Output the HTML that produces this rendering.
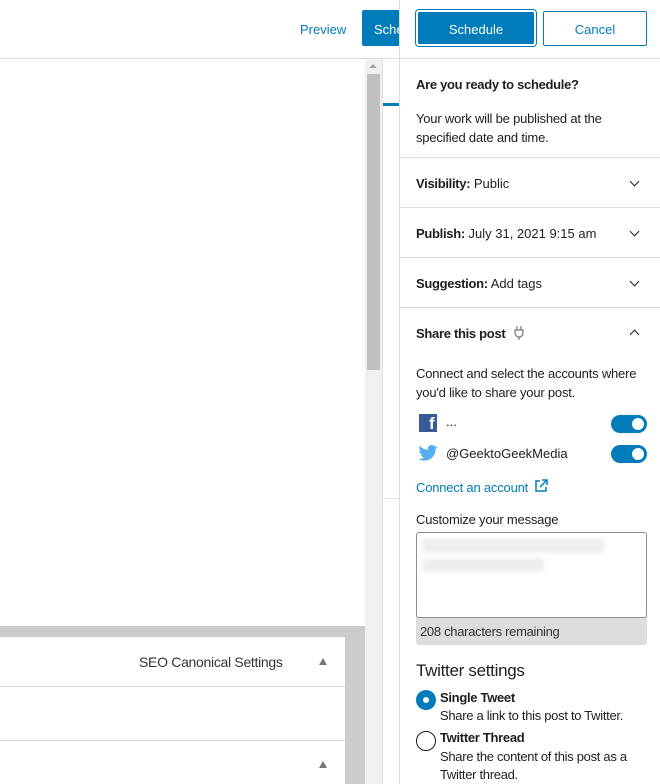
<!DOCTYPE html><html><head><meta charset="utf-8"><style>
*{margin:0;padding:0;box-sizing:border-box}
body{width:660px;height:784px;overflow:hidden;position:relative;background:#fff;font-family:"Liberation Sans",sans-serif;font-size:13px;color:#1e1e1e}
b,.bold{letter-spacing:-0.3px}
.a{position:absolute}
.t{position:absolute;white-space:nowrap}
.row{position:absolute;left:400px;width:260px;border-top:1px solid #ddd}
.chev{position:absolute;right:22px;width:7px;height:7px;border-right:1.6px solid #1e1e1e;border-bottom:1.6px solid #1e1e1e;transform:rotate(45deg)}
.tog{position:absolute;left:611px;width:36px;height:18px;border-radius:9px;background:#007cba}
.tog:after{content:"";position:absolute;right:3px;top:3px;width:12px;height:12px;border-radius:50%;background:#fff}
</style></head><body>
<div class="a" style="left:0;top:58px;width:400px;height:1px;background:#ddd"></div>
<div class="t" style="left:300px;top:22px;color:#007cba">Preview</div>
<div class="a" style="left:362px;top:10px;width:38px;height:36px;background:#007cba;border-radius:2px;overflow:hidden"><span class="t" style="left:12px;top:12px;color:#fff">Sche</span></div>
<div class="a" style="left:365px;top:59px;width:17px;height:725px;background:#f0f0f0"></div>
<div class="a" style="left:367px;top:74px;width:13px;height:296px;background:#c1c1c1"></div>
<div class="a" style="left:369px;top:64px;width:0;height:0;border-left:4px solid transparent;border-right:4px solid transparent;border-bottom:4px solid #a3a3a3"></div>
<div class="a" style="left:382px;top:59px;width:1px;height:725px;background:#e0e0e0"></div>
<div class="a" style="left:383px;top:103px;width:16px;height:3px;background:#007cba"></div>
<div class="a" style="left:383px;top:498px;width:16px;height:1px;background:#e0e0e0"></div>
<div class="a" style="left:0;top:626px;width:365px;height:158px;background:#ccc"></div>
<div class="a" style="left:0;top:637px;width:345px;height:147px;background:#fff"></div>
<div class="a" style="left:0;top:686px;width:345px;height:1px;background:#ddd"></div>
<div class="a" style="left:0;top:740px;width:345px;height:1px;background:#ddd"></div>
<div class="t" style="left:139px;top:654px;font-size:14px;color:#333;letter-spacing:-0.3px">SEO Canonical Settings</div>
<div class="a" style="left:319px;top:658px;border-left:4px solid transparent;border-right:4px solid transparent;border-bottom:7px solid #777"></div>
<div class="a" style="left:319px;top:761px;border-left:4px solid transparent;border-right:4px solid transparent;border-bottom:7px solid #777"></div>
<div class="a" style="left:399px;top:0;width:1px;height:784px;background:#ddd"></div>
<div class="a" style="left:416px;top:10px;width:120px;height:36px;background:#007cba;border:2px solid #fff;outline:1.5px solid #007cba;border-radius:3px;color:#fff;text-align:center;line-height:36px">Schedule</div>
<div class="a" style="left:543px;top:11px;width:104px;height:35px;border:1px solid #007cba;border-radius:2px;color:#007cba;text-align:center;line-height:35px">Cancel</div>
<div class="row" style="top:58px"></div>
<div class="t bold" style="left:416px;top:77px;font-weight:bold">Are you ready to schedule?</div>
<div class="t" style="left:416px;top:109px;line-height:19px;letter-spacing:-0.2px">Your work will be published at the<br>specified date and time.</div>
<div class="row" style="top:157px"></div>
<div class="t" style="left:416px;top:176px"><b>Visibility:</b> Public</div><div class="chev" style="top:178px"></div>
<div class="row" style="top:207px"></div>
<div class="t" style="left:416px;top:226px"><b>Publish:</b> July 31, 2021 9:15 am</div><div class="chev" style="top:228px"></div>
<div class="row" style="top:257px"></div>
<div class="t" style="left:416px;top:276px"><b>Suggestion:</b> Add tags</div><div class="chev" style="top:278px"></div>
<div class="row" style="top:307px"></div>
<div class="t bold" style="left:416px;top:326px;font-weight:bold">Share this post</div>
<svg class="a" style="left:513px;top:325px" width="12" height="16" viewBox="0 0 12 16"><path d="M4 1v4M8 1v4M2 5h8v3a4 4 0 0 1-8 0zM6 12v3" fill="none" stroke="#777" stroke-width="1.2"/></svg>
<div class="chev" style="top:331px;transform:rotate(225deg)"></div>
<div class="t" style="left:416px;top:364px;line-height:19px;letter-spacing:-0.2px">Connect and select the accounts where<br>you'd like to share your post.</div>
<div class="a" style="left:419px;top:414px;width:18px;height:18px;background:#3b5998"></div>
<div class="t" style="left:429px;top:414px;color:#fff;font-weight:bold;font-size:17px">f</div>
<div class="t" style="left:446px;top:414px">...</div>
<div class="tog" style="top:415px"></div>
<svg class="a" style="left:418px;top:445px" width="20" height="16" viewBox="0 0 24 20"><path d="M24 2.4a10 10 0 0 1-2.8.8A5 5 0 0 0 23.3.5a10 10 0 0 1-3.1 1.2A4.9 4.9 0 0 0 11.8 6 14 14 0 0 1 1.7.9a4.9 4.9 0 0 0 1.5 6.6A5 5 0 0 1 1 6.9v.1a4.9 4.9 0 0 0 3.9 4.8 5 5 0 0 1-2.2.1 4.9 4.9 0 0 0 4.6 3.4A9.9 9.9 0 0 1 0 17.3 14 14 0 0 0 7.5 19.5c9.1 0 14-7.5 14-14v-.6A10 10 0 0 0 24 2.4z" fill="#55acee"/></svg>
<div class="t" style="left:446px;top:446px">@GeektoGeekMedia</div>
<div class="tog" style="top:445px"></div>
<div class="t" style="left:416px;top:480px;color:#007cba;letter-spacing:-0.2px">Connect an account</div>
<svg class="a" style="left:534px;top:479px" width="14" height="14" viewBox="0 0 14 14"><path d="M6 2H2v10h10V8M8 1h5v5M13 1L6 8" fill="none" stroke="#007cba" stroke-width="1.5"/></svg>
<div class="t" style="left:416px;top:512px;letter-spacing:-0.2px">Customize your message</div>
<div class="a" style="left:416px;top:532px;width:231px;height:113px;background:#ddd;border-radius:3px"></div>
<div class="a" style="left:416px;top:532px;width:231px;height:86px;background:#fff;border:1px solid #8c8f94;border-radius:3px"></div>
<div class="a" style="left:422px;top:539px;width:182px;height:14px;background:#eee;filter:blur(2px)"></div>
<div class="a" style="left:422px;top:558px;width:122px;height:14px;background:#eee;filter:blur(2px)"></div>
<div class="t" style="left:420px;top:624px;color:#333;letter-spacing:-0.3px">208 characters remaining</div>
<div class="t" style="left:416px;top:661px;font-size:17px;letter-spacing:-0.3px">Twitter settings</div>
<div class="a" style="left:416px;top:690px;width:20px;height:20px;border-radius:50%;background:#007cba"></div>
<div class="a" style="left:423px;top:697px;width:6px;height:6px;border-radius:50%;background:#fff"></div>
<div class="t" style="left:440px;top:690px;letter-spacing:-0.3px;font-weight:bold">Single Tweet</div>
<div class="t" style="left:440px;top:708px;letter-spacing:-0.3px">Share a link to this post to Twitter.</div>
<div class="a" style="left:416px;top:731px;width:20px;height:20px;border-radius:50%;border:1px solid #1e1e1e"></div>
<div class="t" style="left:440px;top:730px;letter-spacing:-0.3px;font-weight:bold">Twitter Thread</div>
<div class="t" style="left:440px;top:748px;line-height:18px;letter-spacing:-0.3px">Share the content of this post as a<br>Twitter thread.</div>
</body></html>
